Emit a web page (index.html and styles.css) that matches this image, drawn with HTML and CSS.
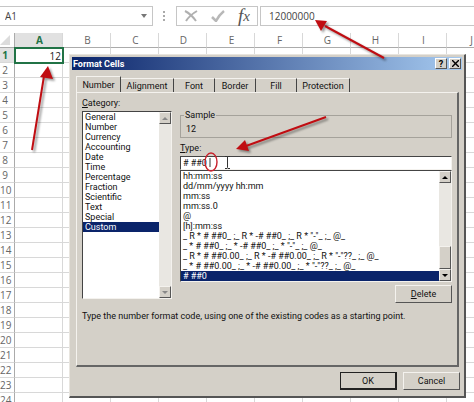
FILE: index.html
```html
<!DOCTYPE html>
<html lang="en">
<head>
    <meta charset="UTF-8">
    <meta name="viewport" content="width=device-width, initial-scale=1.0">
    <title>Format Cells</title>
    <link rel="stylesheet" href="styles.css">
</head>
<body>
    <div class="formula-bar">
        <div class="name-box">
            <input type="text" value="A1" aria-label="Name box">
            <svg width="6" height="4" viewBox="0 0 6 4"><path d="M0 0h6L3 4z" fill="#777"/></svg>
        </div>
        <svg class="grip" width="2" height="10" viewBox="0 0 2 10"><path d="M0 0h2v2H0zM0 4h2v2H0zM0 8h2v2H0z" fill="#aaa"/></svg>
        <div class="tools">
            <button aria-label="Cancel entry">
                <svg width="14" height="12" viewBox="0 0 14 12"><path d="M1 1Q7 4 12 11M13 1Q6 5 2 11" fill="none" stroke="#b0b0b0" stroke-width="2"/></svg>
            </button>
            <button aria-label="Enter">
                <svg width="14" height="12" viewBox="0 0 14 12"><path d="M1 7l4 4Q8 5 13 1" fill="none" stroke="#b8b8b8" stroke-width="2.500"/></svg>
            </button>
            <button class="fx" aria-label="Insert function"><i>f</i><i class="small">x</i></button>
        </div>
        <input class="formula" type="text" value="12000000" aria-label="Formula">
    </div>

    <table class="sheet">
        <thead>
            <tr id="columns">
                <th class="corner"><svg width="10" height="10" viewBox="0 0 10 10"><path d="M10 0v10H0z" fill="#dcdcdc"/></svg></th>
            </tr>
        </thead>
        <tbody id="rows"></tbody>
    </table>

    <div class="dialog" role="dialog" aria-labelledby="title">
        <div class="title-bar">
            <span id="title">Format Cells</span>
            <button aria-label="Help">?</button>
            <button aria-label="Close">
                <svg width="7" height="7" viewBox="0 0 7 7"><path d="M0 0l7 7M7 0L0 7" stroke="#000" stroke-width="1.4"/></svg>
            </button>
        </div>

        <div class="tabs" role="tablist">
            <button class="active" role="tab">Number</button>
            <button class="wide" role="tab">Alignment</button>
            <button role="tab">Font</button>
            <button role="tab">Border</button>
            <button role="tab">Fill</button>
            <button class="wide" role="tab">Protection</button>
        </div>

        <div class="page">
            <div class="columns">
                <div class="category">
                    <label for="category"><u>C</u>ategory:</label>
                    <div class="list-box">
                        <select id="category" size="18">
                            <option>General</option>
                            <option>Number</option>
                            <option>Currency</option>
                            <option>Accounting</option>
                            <option>Date</option>
                            <option>Time</option>
                            <option>Percentage</option>
                            <option>Fraction</option>
                            <option>Scientific</option>
                            <option>Text</option>
                            <option>Special</option>
                            <option selected>Custom</option>
                        </select>
                        <div class="scrollbar disabled">
                            <button aria-label="Scroll up"><svg width="6" height="3" viewBox="0 0 6 3"><path d="M0 3h6L3 0z"/></svg></button>
                            <button aria-label="Scroll down"><svg width="6" height="3" viewBox="0 0 6 3"><path d="M0 0h6L3 3z"/></svg></button>
                        </div>
                    </div>
                </div>

                <div class="format">
                    <fieldset>
                        <legend>Sample</legend>
                        12
                    </fieldset>
                    <label for="type"><u>T</u>ype:</label>
                    <input id="type" type="text" value="# ##0 ">
                    <div class="list-box">
                        <select size="11" aria-label="Format codes">
                            <option>hh:mm:ss</option>
                            <option>dd/mm/yyyy hh:mm</option>
                            <option>mm:ss</option>
                            <option>mm:ss.0</option>
                            <option>@</option>
                            <option>[h]:mm:ss</option>
                            <option>_ R * # ##0_ ;_ R * -# ##0_ ;_ R * "-"_ ;_ @_</option>
                            <option>_ * # ##0_ ;_ * -# ##0_ ;_ * "-"_ ;_ @_</option>
                            <option>_ R * # ##0.00_ ;_ R * -# ##0.00_ ;_ R * "-"??_ ;_ @_</option>
                            <option>_ * # ##0.00_ ;_ * -# ##0.00_ ;_ * "-"??_ ;_ @_</option>
                            <option selected># ##0</option>
                        </select>
                        <div class="scrollbar">
                            <button aria-label="Scroll up"><svg width="6" height="3" viewBox="0 0 6 3"><path d="M0 3h6L3 0z"/></svg></button>
                            <div class="thumb"></div>
                            <button aria-label="Scroll down"><svg width="6" height="3" viewBox="0 0 6 3"><path d="M0 0h6L3 3z"/></svg></button>
                        </div>
                    </div>
                    <button class="push"><span><u>D</u>elete</span></button>
                </div>
            </div>
            <p>Type the number format code, using one of the existing codes as a starting point.</p>
        </div>

        <div class="actions">
            <button class="push default">OK</button>
            <button class="push">Cancel</button>
        </div>
    </div>

    <!-- Red callouts drawn over the sheet and the dialog -->
    <svg class="callouts" width="400" height="180" viewBox="0 0 400 180">
        <g class="arrow">
            <path d="M32 150L44 76" />
            <path class="head" d="M48 66l5 13-13-2z" />
            <path d="M384 58L325 26" />
            <path class="head" d="M315 20l12 1-6 10z" />
            <path d="M326 117L246 146" />
            <path class="head" d="M236 149l9-9 4 11z" />
        </g>
        <ellipse cx="211" cy="162" rx="6" ry="9" fill="none" stroke="#c8202c" stroke-width="1.4" />
        <path d="M210 158v9" stroke="#333" />
        <path d="M225 156.500h2l.5 1 .5-1h2M227.500 157v10M225 168.500h2l.5-1 .5 1h2" fill="none" stroke="#333" />
    </svg>

    <script>
        // Column headers
        const columns = document.getElementById('columns');
        for (const letter of 'ABCDEFGHIJ') {
            const th = document.createElement('th');
            th.textContent = letter;
            if (letter === 'A') th.className = 'selected';
            columns.appendChild(th);
        }

        // Sheet rows, only A1 has a value
        const rows = document.getElementById('rows');
        for (let r = 1; r <= 24; r++) {
            const tr = document.createElement('tr');
            const th = document.createElement('th');
            th.textContent = r;
            if (r === 1) th.className = 'selected';
            tr.appendChild(th);
            for (let c = 0; c < 10; c++) {
                const td = document.createElement('td');
                if (r === 1 && c === 0) {
                    td.className = 'active-cell';
                    td.textContent = '12';
                }
                tr.appendChild(td);
            }
            rows.appendChild(tr);
        }
    </script>
</body>
</html>
```
FILE: styles.css
```css
* {
    box-sizing: border-box;
}

body {
    font-family: "Open Sans", "Noto Sans", sans-serif;
    font-size: 10px;
    color: #444;
    background-color: #fff;
    margin: 0;
    height: 100vh;
    overflow: hidden;
    position: relative;
}

button, input, select {
    font: inherit;
    color: inherit;
    margin: 0;
    padding: 0;
    border: none;
    border-radius: 0;
    outline: none;
    background: none;
}

button {
    display: flex;
    align-items: center;
    justify-content: center;
}

/* Formula bar */
.formula-bar {
    display: flex;
    align-items: center;
    padding-top: 6px;
    height: 33px;
    padding-bottom: 7px;
}

.name-box {
    display: flex;
    align-items: center;
    width: 153px;
    height: 20px;
    padding: 0 5px;
    border: 1px solid #c6c6c6;
    border-left: none;
}

.name-box input {
    flex: 1;
    min-width: 0;
}

.grip {
    margin: 0 11px 0 10px;
}

.tools {
    display: flex;
    align-items: center;
    gap: 13px;
    width: 82px;
    height: 20px;
    padding-left: 7px;
    border: 1px solid #c6c6c6;
}

.fx {
    font-family: "Liberation Serif", serif;
    font-size: 19px;
    line-height: 16px;
    color: #555;
}

.fx .small {
    font-size: 15px;
}

.formula {
    flex: 1;
    min-width: 0;
    height: 20px;
    margin-left: 2px;
    padding-left: 8px;
    border: 1px solid #c6c6c6;
    border-right: none;
}

/* Sheet */
.sheet {
    table-layout: fixed;
    border-collapse: separate;
    border-spacing: 0;
    width: 495px;
    line-height: 14px;
}

.sheet th, .sheet td {
    height: 15px;
    padding: 0;
    border-right: 1px solid #d8d8d8;
    border-bottom: 1px solid #d8d8d8;
    font-weight: normal;
}

.sheet th {
    color: #666;
}

.sheet thead th {
    padding-left: 2px;
    border-bottom-color: #ababab;
}

.sheet th:first-child {
    width: 15px;
    padding-right: 4px;
    border-right-color: #ababab;
}

.sheet .corner {
    padding: 0;
    line-height: 0;
    text-align: right;
    border-right-color: #d8d8d8;
}

.sheet th.selected {
    color: #217346;
    font-weight: bold;
    background-color: #e1e1e1;
}

.sheet .active-cell {
    text-align: right;
    padding-right: 2px;
    color: #222;
    border: none;
    outline: 2px solid #217346;
    outline-offset: -1px;
}

/* Format Cells dialog */
.dialog {
    position: absolute;
    top: 54px;
    left: 69px;
    right: 8px;
    padding: 2px;
    font-family: Roboto, "Open Sans", sans-serif;
    font-size: 9px;
    line-height: 10px;
    color: #111;
    background-color: #d4d0c8;
    border: 1px solid #e8e5df;
    border-right: 2px solid #555;
    border-bottom: 2px solid #555;
}

.title-bar {
    display: flex;
    align-items: center;
    gap: 2px;
    height: 13px;
    padding: 0 1px;
    color: #fff;
    font-weight: bold;
    background: linear-gradient(to right, #0a246a, #a6caf0);
}

.title-bar span {
    flex: 1;
}

.title-bar button {
    width: 12px;
    height: 11px;
    color: #000;
    background-color: #d4d0c8;
    border: 1px solid #fff;
    border-right-color: #555;
    border-bottom-color: #555;
}

.tabs {
    display: flex;
    align-items: flex-end;
    padding: 6px 4px 0;
}

.tabs button {
    width: 41px;
    height: 14px;
    border-top: 1px solid #f4f2ee;
    border-right: 1px solid #444;
}

.tabs .wide {
    width: 53px;
}

.tabs .active {
    width: 45px;
    height: 16px;
    border-left: 1px solid #f4f2ee;
}

.page {
    margin: 0 3px 0 4px;
    padding: 5px 5px 44px 5px;
    border: 1px solid #f4f2ee;
    border-right: 2px solid #666;
    border-bottom: 2px solid #666;
}

.columns {
    display: flex;
    gap: 8px;
}

.category {
    width: 90px;
}

.category label, .format label {
    display: block;
    height: 13px;
}

.format {
    flex: 1;
    min-width: 0;
    padding-top: 12px;
}

.list-box {
    display: flex;
    height: 112px;
    background-color: #fff;
    border: 1px solid #444;
    border-right-color: #f4f2ee;
    border-bottom-color: #f4f2ee;
}

.category .list-box {
    height: 188px;
}

.list-box select {
    flex: 1;
    min-width: 0;
    height: 100%;
    overflow: hidden;
}

.list-box option {
    min-height: 0;
    height: 10px;
    padding: 0 2px;
    line-height: 10px;
}

.list-box option:checked {
    color: #fff;
    background: #0a246a linear-gradient(#0a246a, #0a246a);
}

.scrollbar {
    display: flex;
    flex-direction: column;
    justify-content: space-between;
    width: 12px;
    background-color: #e9e7e2;
}

.scrollbar button, .thumb {
    height: 12px;
    background-color: #d4d0c8;
    border: 1px solid #f4f2ee;
    border-right-color: #555;
    border-bottom-color: #555;
}

.scrollbar .thumb {
    height: 23px;
    margin-top: auto;
}

.disabled path {
    fill: #888;
}

fieldset {
    height: 28px;
    margin: 0 0 5px;
    padding: 4px 5px 0;
    border: 1px solid #a5a29b;
}

legend {
    margin-left: -2px;
    padding: 0 1px;
}

#type {
    display: block;
    width: 100%;
    height: 14px;
    padding: 0 0 0 2px;
    line-height: 10px;
    background-color: #fff;
    border: 1px solid #444;
    border-right-color: #f4f2ee;
    border-bottom-color: #f4f2ee;
}

.push {
    width: 57px;
    height: 18px;
    background-color: #d4d0c8;
    border: 1px solid #f4f2ee;
    border-right-color: #555;
    border-bottom-color: #555;
}

.push.default {
    border: 1px solid #222;
    border-right-width: 2px;
    border-bottom-width: 2px;
}

.format .push {
    margin: 3px 0 0 auto;
}

.page p {
    margin: 8px 0 0;
}

.actions {
    display: flex;
    justify-content: flex-end;
    gap: 6px;
    padding: 5px 2px 4px;
}

/* Callouts */
.callouts {
    position: absolute;
    top: 0;
    left: 0;
    pointer-events: none;
}

.arrow {
    fill: none;
    stroke: #c00d12;
    stroke-width: 2;
    filter: drop-shadow(2px 2px 1px rgba(0, 0, 0, 0.4));
}

.arrow .head {
    fill: #c00d12;
    stroke: none;
}
```
